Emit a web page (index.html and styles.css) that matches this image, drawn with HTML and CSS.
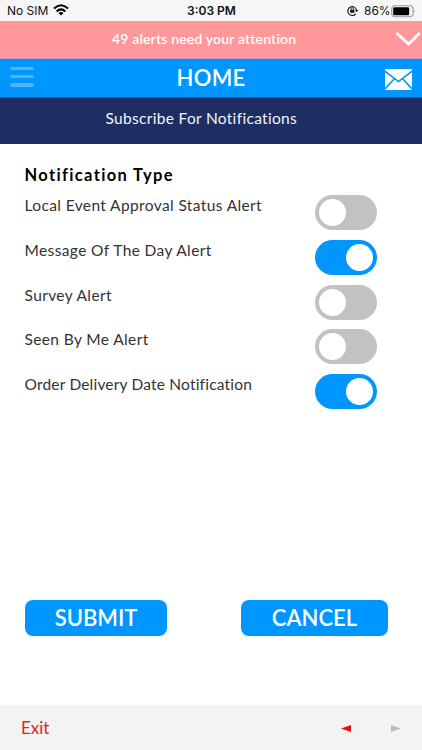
FILE: index.html
```html
<!DOCTYPE html>
<html lang="en">
<head>
<meta charset="utf-8">
<title>Subscribe For Notifications</title>
<link rel="stylesheet" href="styles.css">
</head>
<body>
<div class="status">
  <div class="status-side"><span class="carrier">No SIM</span>
    <svg class="wifi" width="16" height="12" viewBox="0 0 16 12"><g fill="none" stroke="#000" stroke-width="2.1"><path d="M1 4.5Q8 -2 15 4.5"/><path d="M3.6 7.4Q8 3.3 12.4 7.4"/></g><path d="M5.5 9Q8 7 10.5 9L8 11.5Z"/></svg>
  </div>
  <span class="time">3:03 PM</span>
  <div class="status-side end">
    <svg class="lock" width="12" height="11" viewBox="0 0 12 11"><g fill="none" stroke="#111"><path d="M8.7 8.8A4.4 4.4 0 1 1 9.6 5.2" stroke-width="1.1"/><path d="M4 5V4.1a1.3 1.3 0 0 1 2.6 0V5" stroke-width=".8"/></g><path d="M3.2 4.8h4.2v3H3.2zM7.9 4.9h3.5L9.7 7.3z" fill="#111"/></svg>
    <span class="percent">86%</span>
    <svg width="25" height="13" viewBox="0 0 25 13"><rect x=".7" y=".8" width="21.4" height="11" rx="3.2" fill="none" stroke="#999" stroke-width="1.1"/><rect x="2.2" y="2.3" width="16" height="8" rx="1.3"/><path d="M23.2 4.5q1.5 1.8 0 3.6z" fill="#999"/></svg>
  </div>
</div>
<div class="alert"><span>49 alerts need your attention</span>
  <svg class="chevron" width="26" height="16" viewBox="0 0 26 16"><path d="M1.5 2L13.6 13L24.8 2" fill="none" stroke="#fff" stroke-width="2.8"/></svg>
</div>
<header class="nav">
  <div class="menu"><i></i><i></i><i></i></div>
  <h1>HOME</h1>
  <svg class="mail" width="27" height="21" viewBox="0 0 27 21"><path d="M0 0h27v21H0z" fill="#fff"/><path d="M0 2.2L13.5 12.6L27 2.2M0 20L9.3 9.8M27 20L17.7 9.8" fill="none" stroke="#0096ff" stroke-width="1.6"/></svg>
</header>
<div class="subtitle">Subscribe For Notifications</div>
<main>
  <h2>Notification Type</h2>
  <div class="row"><span>Local Event Approval Status Alert</span><b class="toggle"></b></div>
  <div class="row"><span>Message Of The Day Alert</span><b class="toggle on"></b></div>
  <div class="row"><span>Survey Alert</span><b class="toggle"></b></div>
  <div class="row"><span>Seen By Me Alert</span><b class="toggle"></b></div>
  <div class="row"><span class="tight">Order Delivery Date Notification</span><b class="toggle on"></b></div>
</main>
<div class="actions"><button class="submit">SUBMIT</button><button class="cancel">CANCEL</button></div>
<footer><span class="exit">Exit</span>
  <svg class="prev" width="10" height="7" viewBox="0 0 10 7"><path d="M10 0v7L0 3.5z" fill="#e90d0d"/></svg>
  <svg class="next" width="10" height="7" viewBox="0 0 10 7"><path d="M0 0v7l10-3.5z" fill="#bdbdbd"/></svg>
</footer>
</body>
</html>
```
FILE: styles.css
```css
* { box-sizing: border-box; }
body { margin: 0; width: 422px; height: 750px; display: flex; flex-direction: column; background: #fff; font-family: Lato, "Liberation Sans", sans-serif; overflow: hidden; }
svg { display: block; flex: none; }
.status { height: 21px; background: #f6f6f6; display: grid; grid-template-columns: 1fr auto 1fr; align-items: center; padding: 1px 6px 0 7px; font: 12px/20px Inter, sans-serif; color: #111; }
.status-side { display: flex; align-items: center; }
.carrier { width: 46px; white-space: nowrap; }
.wifi { margin-top: -2px; }
.end { justify-content: flex-end; }
.lock { margin-right: 5px; margin-top: -1px; }
.percent { width: 27px; white-space: nowrap; }
.time { font-weight: 600; }
.alert { height: 38px; background: #ff979b; border-bottom: 1px solid #c993b8; display: grid; grid-template-columns: 112px 1fr 27px; padding-top: 8px; color: #fff; font: 600 14px/20px Lato, sans-serif; letter-spacing: .17px; }
.alert span { grid-column: 2; }
.chevron { margin-top: 2px; }
.nav { height: 39px; background: #0096ff; border-bottom: 1px solid #1262b8; display: grid; grid-template-columns: 1fr auto 1fr; padding: 0 10px; color: #fff; }
.menu { width: 24px; display: flex; flex-direction: column; gap: 5px; padding-top: 7.5px; }
.menu i { height: 3.4px; border-radius: 2px; background: #58b3f3; }
h1 { margin: 0; font-size: 22px; font-weight: 600; letter-spacing: .3px; line-height: 38px; }
.mail { justify-self: end; margin-top: 10px; }
.subtitle { height: 46px; background: #1e2e62; color: #f2f4fa; font-size: 15.5px; letter-spacing: .31px; line-height: 41px; padding-left: 105.5px; }
main { padding: 21px 45px 0 24.5px; height: 456px; color: #333; }
h2 { margin: 0; font-size: 16.5px; line-height: 21px; height: 20px; letter-spacing: 1.35px; color: #000; }
.row { height: 44.8px; display: flex; justify-content: space-between; font-size: 15.5px; letter-spacing: .38px; line-height: 20.5px; padding-top: 10px; }
.tight { letter-spacing: .19px; }
.toggle { width: 61.5px; height: 35px; border-radius: 18px; background: #c2c2c2; padding: 4px; margin-right: .5px; }
.toggle::before { content: ""; display: block; width: 27px; height: 27px; border-radius: 50%; background: #fff; }
.toggle.on { background: #0096ff; }
.toggle.on::before { margin-left: auto; }
.actions { display: flex; justify-content: space-between; padding: 0 34px 0 25px; height: 105px; }
button { border: 0; height: 36px; border-radius: 8px; background: #0096ff; color: #fff; font: 600 22px/36px Lato, sans-serif; padding: 0; }
.submit { width: 142px; }
.cancel { width: 147px; }
footer { height: 45px; background: #f3f3f3; display: flex; align-items: center; padding: 0 21px; color: #e82020; font-size: 17px; }
.prev { margin-left: auto; margin-right: 40px; margin-top: 2px; }
.next { margin-top: 2px; }
```
